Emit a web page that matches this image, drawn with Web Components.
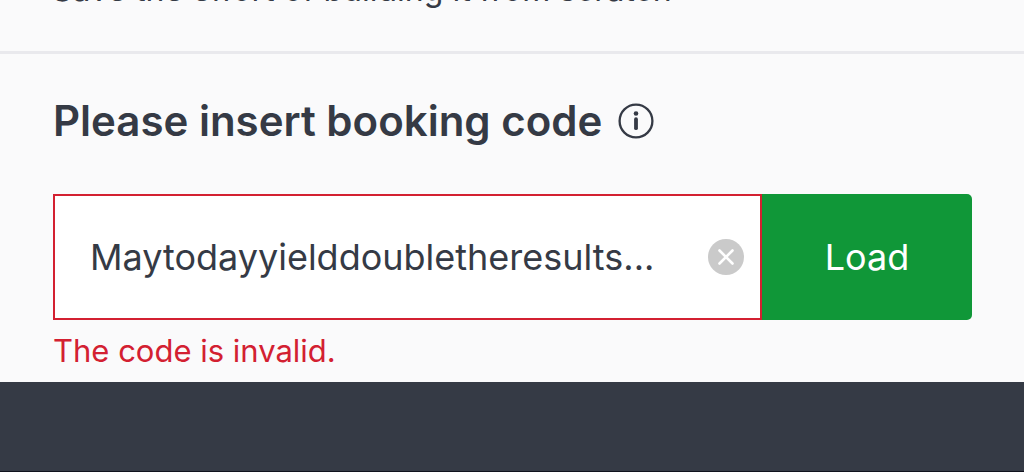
<!DOCTYPE html>
<html lang="en">
<head>
<meta charset="utf-8">
<meta name="viewport" content="width=device-width, initial-scale=1">
<title>Booking code</title>
<style>
html, body { height: 100%; }
body { margin: 0; background: #fafafb; color: #353a45; font-family: Inter, "Liberation Sans", sans-serif; }
</style>
</head>
<body>
<booking-page>
  <intro-strip>Save the effort of building it from scratch</intro-strip>
  <booking-form value="Maytodayyielddoubletheresults..." error="The code is invalid.">
    <span slot="title">Please insert booking code</span>
    <span slot="action">Load</span>
  </booking-form>
</booking-page>
<script>
class BookingPage extends HTMLElement {
  constructor() {
    super();
    this.attachShadow({ mode: 'open' }).innerHTML = `
      <style>
        :host { display: flex; flex-direction: column; min-height: 100vh; }
        footer { flex: 1; background: #353a45; border-bottom: 1px solid #10121d; }
      </style>
      <slot></slot>
      <footer></footer>`;
  }
}

class IntroStrip extends HTMLElement {
  constructor() {
    super();
    this.attachShadow({ mode: 'open' }).innerHTML = `
      <style>
        :host { display: block; padding: 0 52px 41px; border-bottom: 3px solid #e9e9ed; }
        div { display: flex; align-items: flex-end; height: 10px; overflow: hidden; }
        p { margin: 0; font-size: 32px; line-height: 40px; white-space: nowrap; }
      </style>
      <div><p><slot></slot></p></div>`;
  }
}

class InfoButton extends HTMLElement {
  constructor() {
    super();
    this.attachShadow({ mode: 'open' }).innerHTML = `
      <style>
        :host { display: block; }
        button { display: block; padding: 0; border: 0; background: none; color: inherit; }
        svg { display: block; }
      </style>
      <button type="button" aria-label="About booking codes">
        <svg width="36" height="36" viewBox="0 0 36 36" fill="none" stroke="currentColor" stroke-linecap="round">
          <circle cx="18" cy="18" r="16.4" stroke-width="2.3"/>
          <path d="M18 16.2v9" stroke-width="3.8"/>
          <circle cx="18" cy="10.5" r="2.3" fill="currentColor" stroke="none"/>
        </svg>
      </button>`;
  }
}

class BookingForm extends HTMLElement {
  constructor() {
    super();
    this.attachShadow({ mode: 'open' }).innerHTML = `
      <style>
        :host { display: block; padding: 39px 52px 8px; }
        header { display: flex; align-items: center; gap: 16px; padding-left: 1px; }
        h2 { margin: 0; font-size: 42px; line-height: 56px; font-weight: 600; }
        .row { display: flex; margin-top: 45px; }
        .field { flex: 1; min-width: 0; display: flex; align-items: center; gap: 16px;
          box-sizing: border-box; margin-left: 1px; padding: 0 16px 0 35px; border: 2px solid #d32031; background: #fff; }
        input { flex: 1; min-width: 0; height: 122px; padding: 0; border: 0; outline: 0;
          background: none; color: inherit; font: 36px/48px Inter, "Liberation Sans", sans-serif; text-overflow: ellipsis; }
        button { padding: 0; border: 0; font: inherit; }
        .clear { background: none; }
        .clear svg { display: block; }
        .load { width: 210px; border-radius: 0 5px 5px 0; background: #109738; color: #fff; font-size: 36px; line-height: 48px; }
        .error { margin: 8px 0 0; padding-left: 1px; color: #d32031; font-size: 31px; line-height: 46px; }
      </style>
      <form>
        <header>
          <h2><label for="code"><slot name="title"></slot></label></h2>
          <info-button></info-button>
        </header>
        <div class="row">
          <div class="field">
            <input id="code" type="text" aria-invalid="true" aria-describedby="error">
            <button class="clear" type="button" aria-label="Clear">
              <svg width="36" height="36" viewBox="0 0 36 36">
                <circle cx="18" cy="18" r="18" fill="#cacaca"/>
                <path d="M11.5 11.5l13 13M24.5 11.5l-13 13" stroke="#fff" stroke-width="2.6" stroke-linecap="round"/>
              </svg>
            </button>
          </div>
          <button class="load" type="submit"><slot name="action"></slot></button>
        </div>
        <p class="error" id="error" role="alert"></p>
      </form>`;
    const root = this.shadowRoot;
    const input = root.querySelector('input');
    input.value = this.getAttribute('value') || '';
    root.querySelector('.error').textContent = this.getAttribute('error') || '';
    root.querySelector('.clear').addEventListener('click', () => { input.value = ''; input.focus(); });
    root.querySelector('form').addEventListener('submit', event => event.preventDefault());
  }
}

customElements.define('booking-page', BookingPage);
customElements.define('intro-strip', IntroStrip);
customElements.define('info-button', InfoButton);
customElements.define('booking-form', BookingForm);
</script>
</body>
</html>
